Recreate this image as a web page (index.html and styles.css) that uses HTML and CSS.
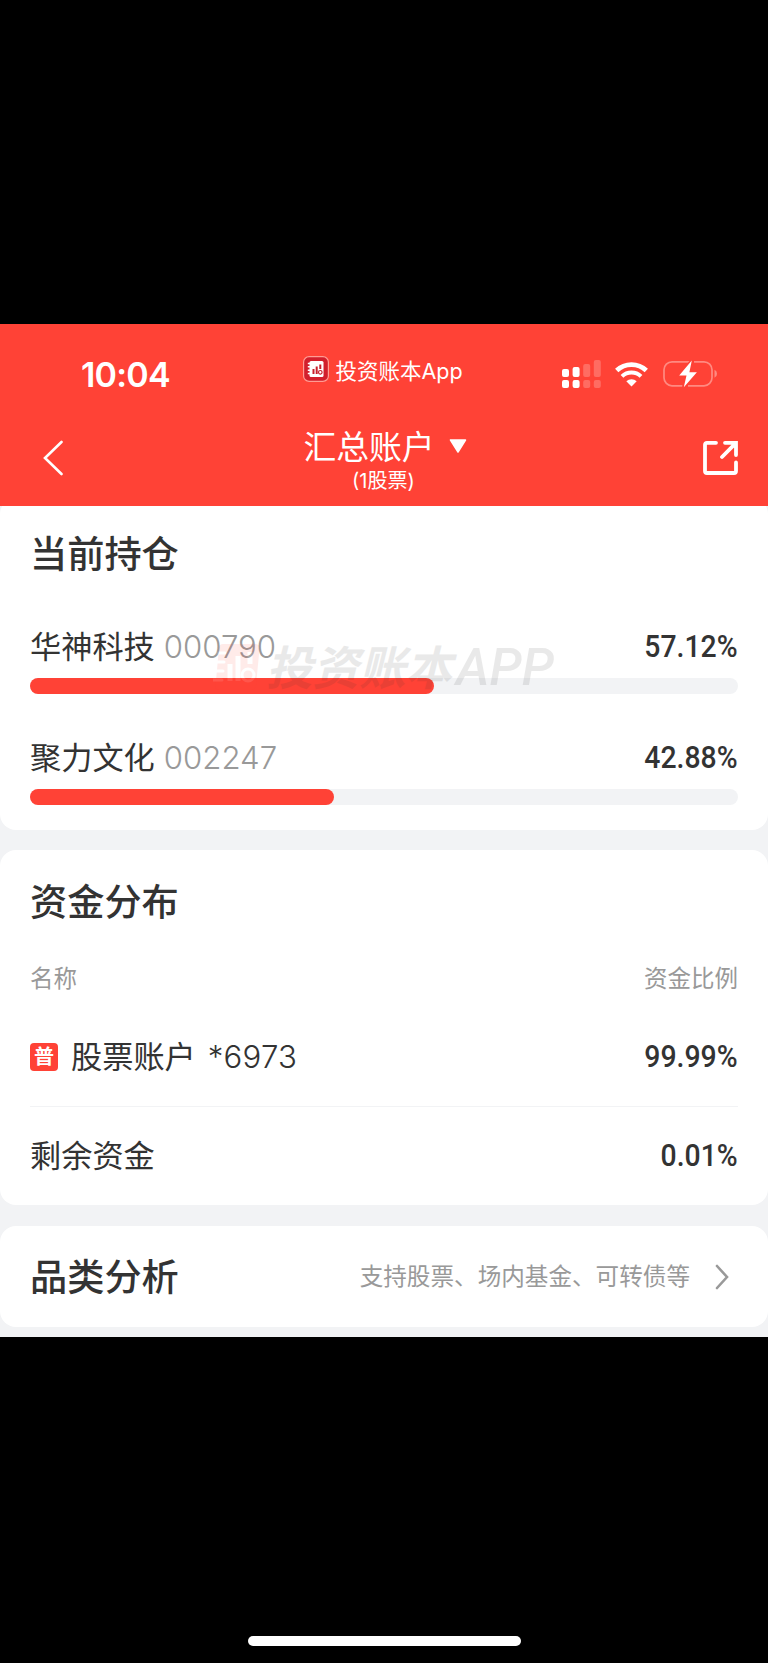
FILE: index.html
```
<!DOCTYPE html>
<html lang="zh-CN">
<head>
  <meta charset="UTF-8">
  <meta name="viewport" content="width=device-width, initial-scale=1.0">
  <title>汇总账户</title>
  <link rel="stylesheet" href="styles.css">
</head>
<body>
  <div class="app">
    <header class="header">
      <div class="status-bar">
        <div class="time">10:04</div>
        <div class="app-label">
          <svg class="app-icon" width="26" height="26" viewBox="0 0 26 26">
            <rect x=".6" y=".6" width="24.8" height="24.8" rx="5.5" fill="#d21f2c" stroke="#ff9c93" stroke-width="1.2"/>
            <rect x="6.5" y="5" width="14" height="16" rx="1.5" fill="#fff"/>
            <path d="M4.8 7.5h3M4.8 10.8h3M4.8 14.2h3M4.8 17.6h3" stroke="#fff" stroke-width="1.5"/>
            <path d="M10.5 18v-5M13.7 18v-7.5M17.3 13V8.5" stroke="#c8202c" stroke-width="2"/>
            <circle cx="17.3" cy="16.3" r="1.8" fill="none" stroke="#c8202c" stroke-width="1.2"/>
          </svg>
          <span>投资账本App</span>
        </div>
        <div class="status-icons">
          <svg width="39" height="28" viewBox="0 0 39 28" fill="#fff">
            <rect x="0" y="9" width="7" height="8" rx="2"/>
            <rect x="10.6" y="7" width="7" height="10" rx="2"/>
            <rect x="0" y="20" width="7" height="8" rx="2"/>
            <rect x="10.6" y="20" width="7" height="8" rx="2"/>
            <g opacity=".22">
              <rect x="21.2" y="4" width="7" height="13" rx="2"/>
              <rect x="31.8" y="0" width="7" height="17" rx="2"/>
              <rect x="21.2" y="20" width="7" height="8" rx="2"/>
              <rect x="31.8" y="20" width="7" height="8" rx="2"/>
            </g>
          </svg>
          <svg class="wifi" width="33" height="25" viewBox="0 0 33 25">
            <path d="M1.7 8.6a21.5 21.5 0 0 1 29.6 0" fill="none" stroke="#fff" stroke-width="4.8"/>
            <path d="M7 14.4a13.7 13.7 0 0 1 19 0" fill="none" stroke="#fff" stroke-width="4"/>
            <path d="M11.3 19.2a7.6 7.6 0 0 1 10.4 0L16.5 24.6z" fill="#fff"/>
          </svg>
          <svg class="battery" width="54" height="28" viewBox="0 0 54 28">
            <path d="M27 1.8H9A8 8 0 0 0 1 9.8v8a8 8 0 0 0 8 8h10.5M31 1.8h10a8 8 0 0 1 8 8v8a8 8 0 0 1-8 8H25" fill="none" stroke="#ff8a81" stroke-width="1.7"/>
            <path d="M51.5 9.8q2.5 1.2 2.5 4t-2.5 4z" fill="#ff8a81"/>
            <path d="M28.8.6 16.2 15.4h7.3L20.8 27.2 33.9 12.2h-7.5z" fill="#fff" stroke="#ff4236" stroke-width="3" paint-order="stroke"/>
          </svg>
        </div>
      </div>
      <div class="nav">
        <svg class="back" width="20" height="36" viewBox="0 0 20 36">
          <path d="M18.5 2 2 18l16.5 16" fill="none" stroke="#fff" stroke-width="2.6" stroke-linecap="round"/>
        </svg>
        <div class="nav-title">
          <div class="account">
            <span>汇总账户</span>
            <svg width="18" height="14" viewBox="0 0 18 14">
              <path d="M1.5 1h15L9 13z" fill="#fff" stroke="#fff" stroke-width="1.5" stroke-linejoin="round"/>
            </svg>
          </div>
          <div class="account-type">(1股票)</div>
        </div>
        <svg class="share" width="36" height="36" viewBox="0 0 36 36">
          <path d="M14 2.8H5Q3 2.8 3 4.8V31q0 2 2 2h27q2 0 2-2V22.5M23 2.8H34V15M33.5 3.3 20 17" fill="none" stroke="#fff" stroke-width="3.8" stroke-linecap="round"/>
        </svg>
      </div>
    </header>

    <main>
      <section class="card holdings">
        <h2>当前持仓</h2>
        <div class="holding">
          <div class="row">
            <div class="name">华神科技<span class="code">000790</span></div>
            <div class="percent">57.12%</div>
          </div>
          <div class="bar"><div class="bar-fill" style="width: 57.12%"></div></div>
        </div>
        <div class="holding">
          <div class="row">
            <div class="name">聚力文化<span class="code">002247</span></div>
            <div class="percent">42.88%</div>
          </div>
          <div class="bar"><div class="bar-fill" style="width: 42.88%"></div></div>
        </div>
        <div class="watermark">
          <svg width="48" height="46" viewBox="0 0 48 46">
            <path d="M10 0h32q5 0 4.5 5L43 41q-.5 5-5.5 5H6q-4 0-3.5-4L6 4q.5-4 4-4z" fill="#ff4236"/>
            <path d="M2 9h10M1 18h10M0 27h10M0 36h9" stroke="#fff" stroke-width="3" stroke-linecap="round"/>
            <path d="M17 37V20M25 37V12M37 20V8" stroke="#fff" stroke-width="5"/>
            <circle cx="35" cy="31" r="6" fill="none" stroke="#fff" stroke-width="3"/>
          </svg>
          <span class="watermark-cn">投资账本</span>
          <span class="watermark-en">APP</span>
        </div>
      </section>

      <section class="card funds">
        <h2>资金分布</h2>
        <div class="row table-head">
          <span>名称</span>
          <span>资金比例</span>
        </div>
        <div class="row fund-row">
          <div class="name"><span class="tag">普</span>股票账户<span class="number">*6973</span></div>
          <div class="percent">99.99%</div>
        </div>
        <div class="row fund-row">
          <div class="name">剩余资金</div>
          <div class="percent">0.01%</div>
        </div>
      </section>

      <section class="card analysis">
        <h2>品类分析</h2>
        <div class="hint">
          <span>支持股票、场内基金、可转债等</span>
          <svg width="14" height="26" viewBox="0 0 14 26">
            <path d="M2 2l10 11L2 24" fill="none" stroke="#999" stroke-width="2.6" stroke-linecap="round"/>
          </svg>
        </div>
      </section>
    </main>
  </div>
  <div class="home-indicator"></div>
</body>
</html>
```
FILE: styles.css
```
* {
  box-sizing: border-box;
}
body {
  margin: 0;
  height: 1663px;
  padding: 324px 0 17px;
  background: #000;
  color: #333;
  font-family: Inter, "Noto Sans CJK SC", sans-serif;
  display: flex;
  flex-direction: column;
  justify-content: space-between;
  align-items: center;
  overflow: hidden;
}
.app {
  width: 768px;
  height: 1013px;
  background: #f2f3f5;
  overflow: hidden;
}
.header {
  position: relative;
  z-index: 1;
  height: 182px;
  background: #ff4236;
  color: #fff;
}
.status-bar {
  display: grid;
  grid-template-columns: 1fr auto 1fr;
  height: 100px;
  padding: 0 51px 0 81px;
}
.time {
  font-size: 34px;
  font-weight: 600;
  line-height: 102px;
  letter-spacing: -.8px;
}
.app-label {
  display: flex;
  align-items: center;
  gap: 6px;
  height: 90px;
  margin-left: -32px;
  font-size: 21.5px;
  font-weight: 400;
}
.status-icons {
  display: flex;
  justify-content: flex-end;
  align-items: center;
  height: 100px;
}
.wifi {
  margin: 0 15px 0 14px;
}
.nav {
  display: flex;
  justify-content: space-between;
  height: 82px;
  padding: 0 30px 0 43px;
}
.back, .share {
  margin-top: 16px;
}
.nav-title {
  margin-left: 5px;
}
.account {
  display: flex;
  align-items: center;
  gap: 14px;
  height: 43px;
  font-size: 32.8px;
  font-weight: 400;
}
.account span {
  margin-top: -3px;
}
.account-type {
  width: 160px;
  line-height: 28px;
  font-size: 20px;
  font-weight: 400;
  text-align: center;
}
.card {
  position: relative;
  padding: 0 30px;
  background: #fff;
  border-radius: 16px;
}
h2 {
  margin: 0;
  font-size: 37.2px;
  line-height: 56px;
  font-weight: 500;
}
.row {
  display: flex;
  justify-content: space-between;
  align-items: center;
}
.name {
  display: flex;
  align-items: center;
  font-size: 31.2px;
  font-weight: 400;
  line-height: 46px;
}
.code {
  margin-left: 9px;
  color: #999;
  font-weight: 300;
}
.number {
  margin-left: 12px;
  font-weight: 300;
  letter-spacing: .2px;
}
.percent {
  font-family: Roboto, sans-serif;
  font-size: 31.5px;
  font-weight: 500;
  line-height: 46px;
  transform: scaleX(.9);
  transform-origin: right;
}
.holdings {
  height: 332px;
  margin-top: -8px;
  padding-top: 29px;
}
.holding {
  height: 111px;
}
.holdings h2 {
  margin-bottom: 41px;
}
.bar {
  height: 16px;
  margin-top: 8px;
  background: #f2f3f5;
  border-radius: 8px;
}
.bar-fill {
  height: 100%;
  background: #ff4236;
  border-radius: 8px;
}
/* sits over the first holding */
.watermark {
  position: absolute;
  top: 137px;
  left: 213px;
  display: flex;
  align-items: center;
  height: 64px;
  opacity: .1;
  color: #333;
}
.watermark-cn {
  margin: -5px 4px 0 5px;
  font-size: 46.5px;
  font-weight: 700;
  font-style: italic;
}
.watermark-en {
  font-family: Roboto, sans-serif;
  font-size: 52px;
  font-weight: 500;
  font-style: italic;
}
.funds {
  height: 355px;
  margin-top: 20px;
  padding-top: 25px;
}
.table-head {
  height: 36px;
  margin-top: 28px;
  color: #999;
  font-size: 23.5px;
  font-weight: 400;
}
.fund-row {
  height: 99px;
  border-bottom: 1px solid #f2f3f5;
}
.table-head + .fund-row {
  height: 112px;
  padding-top: 13px;
}
.fund-row:last-child {
  height: 97px;
  border-bottom: none;
}
.tag {
  width: 28px;
  margin-right: 13px;
  background: #ff4236;
  border-radius: 4px;
  color: #fff;
  font-size: 20px;
  font-weight: 700;
  line-height: 28px;
  text-align: center;
}
.analysis {
  display: flex;
  justify-content: space-between;
  align-items: center;
  height: 101px;
  margin-top: 21px;
}
.analysis h2 {
  padding-top: 3px;
}
.hint {
  display: flex;
  align-items: center;
  gap: 25px;
  margin-right: 9px;
  color: #999;
  font-size: 23.6px;
  font-weight: 400;
}
.hint span {
  margin-top: -3px;
}
.home-indicator {
  width: 273px;
  height: 10px;
  background: #fff;
  border-radius: 5px;
}
```
